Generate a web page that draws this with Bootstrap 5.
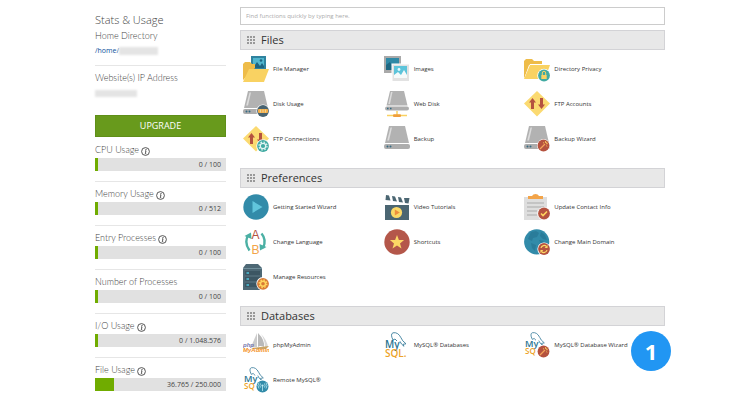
<!DOCTYPE html>
<html lang="en">
<head>
<meta charset="utf-8">
<meta name="viewport" content="width=device-width, initial-scale=1">
<title>Hosting control panel</title>
<link href="https://cdn.jsdelivr.net/npm/bootstrap@5.3.0/dist/css/bootstrap.min.css" rel="stylesheet">
<style>
body{font-family:"Open Sans","Noto Sans",sans-serif;font-size:6px;line-height:12px;color:#444;background:#fff;overflow-x:hidden}
.shell{padding:7px 85px 0 95px;gap:14px}
.side{flex:0 0 131px;padding-top:6px}
.side h1{font-size:11px;line-height:14px;font-weight:300;color:#444;margin:0 0 3px}
.cap{font-family:Lato,"Open Sans",sans-serif;font-size:9px;line-height:12px;font-weight:300;color:#444;margin:0}
.path{font-size:7px;line-height:12px;margin-top:3px;color:#0b4f9c}
.smudge{background:#e4e4e4;filter:blur(1px);height:8px;width:39px}
.smudge-ip{width:42px;margin:6px 0 0;height:7px}
.block{border-bottom:1px solid #e6e6e6}
.block-home{padding-bottom:8px;margin-bottom:6px}
.btn-up{background:#689a1c;color:#fff;font-size:9px;line-height:12px;padding:4px 0;border:1px solid #5f8f18;border-radius:0;margin:18px 0 7px}
.btn-up:hover{background:#5b8817;color:#fff}
.stat{padding-bottom:10px;margin-bottom:6px}
.stat:last-child{border:0}
.stat .cap{margin-bottom:2px}
.info{width:9px;height:9px;margin:2px 0 0 2px}
.meter{height:13px;background:#e1e1e1;border-radius:0;position:relative;font-size:7px}
.meter .progress-bar{background:#70ac00;min-width:3px}
.meter-val{right:5px;top:0;line-height:13px;color:#444}
.find{height:18px;min-height:0;font-size:6px;line-height:12px;padding:2px 5px;border:1px solid #ccc;border-radius:0;color:#444;margin-bottom:5px}
.find::placeholder{color:#aaa;opacity:1}
.group-head{height:20px;background:#e8e8e8;border:1px solid #d3d3d6;padding-left:6px;gap:6px}
.group-head h2{font-size:11px;line-height:18px;font-weight:400;color:#333;margin:0}
.grip{width:8px;height:8px}
.tools{padding:6px 0 0 3px;row-gap:9px}
.tool{height:26px;gap:4px;color:#333;text-decoration:none}
.tool:hover{color:#0b4f9c}
.pic{width:26px;height:26px;flex:none}
.group{margin-bottom:16px}
.step{width:40px;height:40px;right:-6px;top:25px;background:#2196f3;color:#fff;font-size:22px;line-height:40px;font-weight:700}
</style>
<script src="https://cdn.jsdelivr.net/npm/bootstrap@5.3.0/dist/js/bootstrap.bundle.min.js"></script>
</head>
<body>
<svg width="0" height="0" class="position-absolute" aria-hidden="true">
<defs>
<symbol id="grip" viewBox="0 0 8 8"><path fill="#999" d="M0 0h2v2H0zM3 0h2v2H3zM6 0h2v2H6zM0 3h2v2H0zM3 3h2v2H3zM6 3h2v2H6zM0 6h2v2H0zM3 6h2v2H3zM6 6h2v2H6z"/></symbol>
<symbol id="info" viewBox="0 0 9 9"><circle cx="4.5" cy="4.5" r="3.900" fill="#fff" stroke="#444" stroke-width=".9"/><circle cx="5" cy="2.6" r=".6" fill="#333"/><path d="M4 3.9h1L4.3 6.7h.9" fill="none" stroke="#333" stroke-width=".8"/></symbol>
<symbol id="drive" viewBox="0 0 26 26"><path d="M5 0h16l4 17H1z" fill="#b2b2b2"/><path d="M6.500 1.500h1.500L5 14.500H3.200z" fill="#dcdcdc"/><rect x="0" y="18" width="26" height="5" rx="2" fill="#adadad"/><circle cx="3.500" cy="20.500" r="1" fill="#356b83"/><circle cx="6.500" cy="20.500" r="1" fill="#356b83"/></symbol>
<symbol id="wand" viewBox="0 0 13 13"><circle cx="6.500" cy="6.500" r="6.500" fill="#fff"/><circle cx="6.500" cy="6.500" r="5.900" fill="#b5523f"/><path d="M3 10l5-5" stroke="#f5a45a" stroke-width="1.200"/><path d="M8.500 2v2M10.800 4.700H9M9.300 3.800l1.200-1.200M6 3.500l1 .7M9.500 6.500l.5 1" stroke="#ffd45e" stroke-width=".8"/></symbol>
<symbol id="files" viewBox="0 0 26 26"><path d="M8 0h15v14H8z" fill="#2f839f"/><path d="M10 2h11v10H10z" fill="#51b7cf"/><path d="M10 12l4-6 3 4 2-3 2 3v2z" fill="#1e6481"/><circle cx="18" cy="4.500" r="1.300" fill="#1e6481"/><path d="M0 24V8l2-2h5l2 2h3v4z" fill="#eebc49"/><path d="M6 13h20l-5 13H0z" fill="#f9d262"/></symbol>
<symbol id="images" viewBox="0 0 26 26"><path d="M0 0h17v17H0z" fill="#a9a9a9"/><path d="M2 2h13v12H2z" fill="#2f89a6"/><path d="M2 14V9l4-3 4 8z" fill="#1e6782"/><path d="M7.500 7.500H26V26H7.500z" fill="#fff"/><path d="M8.500 8.500H25V25H8.500z" fill="#e2e2e2"/><path d="M10 10h13v12H10z" fill="#5dc4da"/><path d="M10 22v-3l4-3 3 3 3-5 3 5v3z" fill="#f5fafa"/><circle cx="15" cy="13.500" r="1.400" fill="#e7fbff"/></symbol>
<symbol id="privacy" viewBox="0 0 26 26"><path d="M0 23V5l2-2h6l2 2h8v4H5z" fill="#eebc49"/><path d="M6 8h20l-5 15H0z" fill="#fff"/><path d="M6 9h20l-5 14H0z" fill="#f9d262"/><circle cx="20" cy="19.500" r="6.700" fill="#fff"/><circle cx="20" cy="19.500" r="5.900" fill="#41aaa2"/><path d="M17.300 19h5.400v4h-5.400z" fill="#f9d262"/><path d="M18.300 19v-2a1.700 1.700 0 0 1 3.400 0v2" fill="none" stroke="#f9d262"/></symbol>
<symbol id="diskuse" viewBox="0 0 26 26"><use href="#drive" width="26" height="26"/><circle cx="20" cy="20" r="6.600" fill="#fff"/><circle cx="20" cy="20" r="5.900" fill="#486370"/><rect x="15" y="18" width="10" height="4" rx="1" fill="#f6ae48"/><path d="M17.500 18.500v3M20 18.500v3M22.500 18.500v3" stroke="#e9e0ad" stroke-width=".8"/></symbol>
<symbol id="webdisk" viewBox="0 0 26 26"><path d="M6 0h14l3.500 14.500h-21z" fill="#b2b2b2"/><path d="M7 1h1.500L6 13H4.300z" fill="#dcdcdc"/><rect x="1" y="15.500" width="24" height="4" rx="2" fill="#adadad"/><path d="M3 17.500h1.500M6 17.500h1.500" stroke="#356b83" stroke-width="1.500"/><path d="M13 20v4M3 24.500h20" stroke="#f9d262" stroke-width="1.500"/><rect x="9" y="23.200" width="8" height="2.800" rx="1" fill="#ef9f3c"/></symbol>
<symbol id="diamond" viewBox="0 0 26 26"><path d="M13 0l13 12.500L13 25.500 0 12.500z" fill="#fbda71"/></symbol>
<symbol id="ftp" viewBox="0 0 26 26"><use href="#diamond" width="26" height="26"/><path d="M8.500 7L12 11.500h-2V18H7v-6.500H5zM17.500 18L21 13.500h-2V7h-3v6.500h-2z" fill="#b5523f"/></symbol>
<symbol id="ftpconn" viewBox="0 0 26 26"><use href="#ftp" width="26" height="26"/><circle cx="20" cy="20" r="6.700" fill="#fff"/><circle cx="20" cy="20" r="5.900" fill="#41aaa2"/><circle cx="20" cy="20" r="2.700" fill="none" stroke="#e4f5f4" stroke-width="1.200"/><circle cx="20" cy="20" r="4" fill="none" stroke="#e4f5f4" stroke-width="1.200" stroke-dasharray="1.600 1.540"/></symbol>
<symbol id="bkwiz" viewBox="0 0 26 26"><use href="#drive" width="26" height="26"/><use href="#wand" x="13" y="13" width="13" height="13"/></symbol>
<symbol id="play" viewBox="0 0 26 26"><circle cx="13" cy="13" r="12.700" fill="#328ba9"/><path d="M9.500 7v12l10-6z" fill="#61c5dc"/></symbol>
<symbol id="video" viewBox="0 0 26 26"><path d="M1 11h24v15H1z" fill="#4b6672"/><path d="M2 1l3 .4 1.500 5L1.500 6zM8 2l3 .4 2 5-4-.5zM14 3l3 .4 2 5-4-.5zM20 4h5.500l-1 5.500L21 9z" fill="#4b6672"/><circle cx="12.500" cy="18.500" r="5.600" fill="#fbd966"/><path d="M10.800 15.500v6l5-3z" fill="#ee8e3b"/></symbol>
<symbol id="contact" viewBox="0 0 26 26"><path d="M0 3h23v23H0z" fill="#dedede"/><path d="M4 5V2h4q1-2 3.500-2T15 2h4v3z" fill="#f3a449"/><path d="M3 9h17M3 13h17M3 17h10M3 21h10" stroke="#bcbcbc" stroke-width="1.300"/><circle cx="20" cy="19.500" r="6.600" fill="#fff"/><circle cx="20" cy="19.500" r="5.900" fill="#b5523f"/><path d="M17 19.500l2 2 4-4" fill="none" stroke="#ffd45e" stroke-width="1.600"/></symbol>
<symbol id="lang" viewBox="0 0 26 26"><g fill="none" stroke="#4bb0a4" stroke-width="2.400"><path d="M6.500 21.500Q1 14 5 6.500"/><path d="M18.500 4.500Q24 11 20 19"/></g><path d="M1.500 7L8 3.500l.5 6.500zM23.500 18L17 21.500l-.5-6.500z" fill="#4bb0a4"/><text x="12.500" y="9.500" font-family="Liberation Sans,sans-serif" font-size="12" text-anchor="middle" fill="#b5523f">A</text><text x="12.500" y="24.500" font-family="Liberation Sans,sans-serif" font-size="12" text-anchor="middle" fill="#f3a449">B</text></symbol>
<symbol id="star" viewBox="0 0 26 26"><circle cx="13" cy="13" r="12.700" fill="#b4574a"/><path d="M13 6l1.900 4.900 5.200.2-4.100 3.300 1.500 5.100-4.500-3-4.500 3 1.500-5.100-4.100-3.300 5.200-.2z" fill="#fcd765"/></symbol>
<symbol id="domain" viewBox="0 0 26 26"><circle cx="12.700" cy="12.800" r="12.600" fill="#328ba9"/><path d="M7 3l5-1 3 2-2 4-4 1-1 3-4-2zM17 3l4 3 2 5-4-1-3-3zM7 14l5 2-1 6-3-3zM15 11l5 1-3 3z" fill="#2a7c9a"/><circle cx="20" cy="20" r="6.600" fill="#fff"/><circle cx="20" cy="20" r="5.900" fill="#b5523f"/><path d="M17 19a3.200 3.200 0 0 1 5.500-1.500M23 21a3.200 3.200 0 0 1-5.500 1.500" fill="none" stroke="#fcd765" stroke-width="1.200"/><path d="M23.600 16v3h-3zM16.400 24v-3h3z" fill="#fcd765"/></symbol>
<symbol id="server" viewBox="0 0 26 26"><path d="M0 4l3-4h12l4 4v22H0z" fill="#4d6875"/><path d="M0 4.500h19" stroke="#71909c"/><path d="M2 7h15v4H2zM2 13h15v4H2zM2 19h15v4H2z" fill="#3c5663"/><path d="M3.500 9H6M3.500 15H6M3.500 21H6" stroke="#4dc3dc" stroke-width="1.600"/><circle cx="20" cy="19.800" r="6.700" fill="#fff"/><circle cx="20" cy="19.800" r="5.900" fill="#d87a36"/><circle cx="20" cy="19.800" r="2.500" fill="none" stroke="#ffd660" stroke-width="1.400"/><circle cx="20" cy="19.800" r="3.800" fill="none" stroke="#ffd660" stroke-width="1.400" stroke-dasharray="1.500 1.480"/></symbol>
<symbol id="pma" viewBox="0 0 26 26"><path d="M14 1L8 15h6z" fill="#ccc"/><path d="M15 1q7 7 6 14-4-2-6 0z" fill="#b9b9b9"/><path d="M18 2q6 6 7 13h-3q0-7-4-13z" fill="#d7d7d7"/><path d="M8 16l18-2-3 3H10z" fill="#c9a568"/><text x="0" y="15" font-family="Liberation Sans,sans-serif" font-size="6" font-style="italic" font-weight="700" fill="#7476ae">php</text><text x="0" y="20" font-family="Liberation Sans,sans-serif" font-size="6" font-weight="700" font-style="italic" fill="#f4911e">MyAdmin</text></symbol>
<symbol id="dolphin" viewBox="0 0 26 26"><path d="M9 8Q6 2 9 .8q5-1 8 5 1 3 5 6l-3 .5 1 2q-3-2-4-5M9 8l2-1 2 2" fill="none" stroke="#397d9b" stroke-width=".9"/><text x="1" y="16" font-family="Open Sans,sans-serif" font-size="10" font-weight="600" fill="#287491">My</text></symbol>
<symbol id="mysql" viewBox="0 0 26 26"><use href="#dolphin" width="26" height="26"/><text x="1" y="25" font-family="Open Sans,sans-serif" font-size="10" font-weight="600" fill="#eda329">SQL.</text></symbol>
<symbol id="mysqlwiz" viewBox="0 0 26 26"><use href="#dolphin" width="24" height="24"/><text x="1" y="22" font-family="Open Sans,sans-serif" font-size="8" font-weight="600" fill="#eda329">SQ</text><use href="#wand" x="13" y="13" width="13" height="13"/></symbol>
<symbol id="remote" viewBox="0 0 26 26"><use href="#dolphin" width="24" height="24"/><text x="1" y="22" font-family="Open Sans,sans-serif" font-size="8" font-weight="600" fill="#eda329">SQ</text><circle cx="19.500" cy="19.500" r="6.700" fill="#fff"/><circle cx="19.500" cy="19.500" r="6" fill="#328ba9"/><circle cx="19.500" cy="18.500" r="1.100" fill="#bdeaf3"/><path d="M19.500 19v5M17.500 16.500q-1.200 2 0 4M21.500 16.500q1.200 2 0 4M16 15.500q-2 3 0 6M23 15.500q2 3 0 6" fill="none" stroke="#bdeaf3" stroke-width=".8"/></symbol>
</defs>
</svg>

<div class="shell d-flex align-items-start">
  <aside class="side">
    <h1>Stats &amp; Usage</h1>
    <div class="block block-home">
      <p class="cap">Home Directory</p>
      <div class="path d-flex align-items-center"><span>/home/</span><span class="smudge"></span></div>
    </div>
    <p class="cap">Website(s) IP Address</p>
    <div class="smudge smudge-ip"></div>
    <button type="button" class="btn btn-up w-100 d-block">UPGRADE</button>

    <div class="block stat">
      <p class="cap d-flex align-items-center">CPU Usage <svg class="info"><use href="#info"/></svg></p>
      <div class="progress meter"><div class="progress-bar" style="width:0%"></div><span class="meter-val position-absolute">0 / 100</span></div>
    </div>
    <div class="block stat">
      <p class="cap d-flex align-items-center">Memory Usage <svg class="info"><use href="#info"/></svg></p>
      <div class="progress meter"><div class="progress-bar" style="width:0%"></div><span class="meter-val position-absolute">0 / 512</span></div>
    </div>
    <div class="block stat">
      <p class="cap d-flex align-items-center">Entry Processes <svg class="info"><use href="#info"/></svg></p>
      <div class="progress meter"><div class="progress-bar" style="width:0%"></div><span class="meter-val position-absolute">0 / 100</span></div>
    </div>
    <div class="block stat">
      <p class="cap">Number of Processes</p>
      <div class="progress meter"><div class="progress-bar" style="width:0%"></div><span class="meter-val position-absolute">0 / 100</span></div>
    </div>
    <div class="block stat">
      <p class="cap d-flex align-items-center">I/O Usage <svg class="info"><use href="#info"/></svg></p>
      <div class="progress meter"><div class="progress-bar" style="width:0%"></div><span class="meter-val position-absolute">0 / 1.048.576</span></div>
    </div>
    <div class="block stat mb-0 pb-0">
      <p class="cap d-flex align-items-center">File Usage <svg class="info"><use href="#info"/></svg></p>
      <div class="progress meter"><div class="progress-bar" style="width:14.7%"></div><span class="meter-val position-absolute">36.765 / 250.000</span></div>
    </div>
  </aside>

  <main class="flex-grow-1">
    <input type="text" class="form-control find" aria-label="Find functions" placeholder="Find functions quickly by typing here.">

    <section class="group">
      <div class="group-head d-flex align-items-center"><svg class="grip"><use href="#grip"/></svg><h2>Files</h2></div>
      <div class="tools row row-cols-3 g-0">
        <div class="col"><a href="#" class="tool d-flex align-items-center"><svg class="pic"><use href="#files"/></svg>File Manager</a></div>
        <div class="col"><a href="#" class="tool d-flex align-items-center"><svg class="pic"><use href="#images"/></svg>Images</a></div>
        <div class="col"><a href="#" class="tool d-flex align-items-center"><svg class="pic"><use href="#privacy"/></svg>Directory Privacy</a></div>
        <div class="col"><a href="#" class="tool d-flex align-items-center"><svg class="pic"><use href="#diskuse"/></svg>Disk Usage</a></div>
        <div class="col"><a href="#" class="tool d-flex align-items-center"><svg class="pic"><use href="#webdisk"/></svg>Web Disk</a></div>
        <div class="col"><a href="#" class="tool d-flex align-items-center"><svg class="pic"><use href="#ftp"/></svg>FTP Accounts</a></div>
        <div class="col"><a href="#" class="tool d-flex align-items-center"><svg class="pic"><use href="#ftpconn"/></svg>FTP Connections</a></div>
        <div class="col"><a href="#" class="tool d-flex align-items-center"><svg class="pic"><use href="#drive"/></svg>Backup</a></div>
        <div class="col"><a href="#" class="tool d-flex align-items-center"><svg class="pic"><use href="#bkwiz"/></svg>Backup Wizard</a></div>
      </div>
    </section>

    <section class="group">
      <div class="group-head d-flex align-items-center"><svg class="grip"><use href="#grip"/></svg><h2>Preferences</h2></div>
      <div class="tools row row-cols-3 g-0">
        <div class="col"><a href="#" class="tool d-flex align-items-center"><svg class="pic"><use href="#play"/></svg>Getting Started Wizard</a></div>
        <div class="col"><a href="#" class="tool d-flex align-items-center"><svg class="pic"><use href="#video"/></svg>Video Tutorials</a></div>
        <div class="col"><a href="#" class="tool d-flex align-items-center"><svg class="pic"><use href="#contact"/></svg>Update Contact Info</a></div>
        <div class="col"><a href="#" class="tool d-flex align-items-center"><svg class="pic"><use href="#lang"/></svg>Change Language</a></div>
        <div class="col"><a href="#" class="tool d-flex align-items-center"><svg class="pic"><use href="#star"/></svg>Shortcuts</a></div>
        <div class="col"><a href="#" class="tool d-flex align-items-center"><svg class="pic"><use href="#domain"/></svg>Change Main Domain</a></div>
        <div class="col"><a href="#" class="tool d-flex align-items-center"><svg class="pic"><use href="#server"/></svg>Manage Resources</a></div>
      </div>
    </section>

    <section class="position-relative">
      <div class="group-head d-flex align-items-center"><svg class="grip"><use href="#grip"/></svg><h2>Databases</h2></div>
      <div class="tools row row-cols-3 g-0">
        <div class="col"><a href="#" class="tool d-flex align-items-center"><svg class="pic"><use href="#pma"/></svg>phpMyAdmin</a></div>
        <div class="col"><a href="#" class="tool d-flex align-items-center"><svg class="pic"><use href="#mysql"/></svg>MySQL® Databases</a></div>
        <div class="col"><a href="#" class="tool d-flex align-items-center"><svg class="pic"><use href="#mysqlwiz"/></svg>MySQL® Database Wizard</a></div>
        <div class="col"><a href="#" class="tool d-flex align-items-center"><svg class="pic"><use href="#remote"/></svg>Remote MySQL®</a></div>
      </div>
      <span class="step position-absolute rounded-circle text-center">1</span>
    </section>
  </main>
</div>
</body>
</html>
